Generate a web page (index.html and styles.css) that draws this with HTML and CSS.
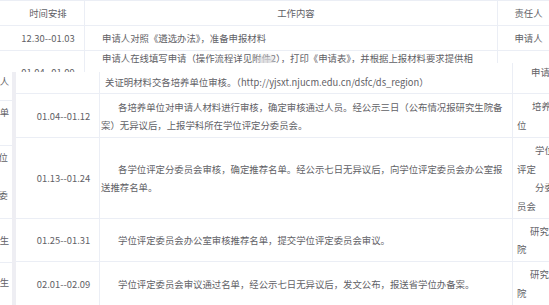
FILE: index.html
```html
<!DOCTYPE html>
<html lang="zh">
<head>
<meta charset="utf-8">
<title>遴选时间安排</title>
<link rel="stylesheet" href="styles.css">
</head>
<body>
<div class="stage">
  <div class="base">
    <div class="row head">
      <div class="cell c-time">时间安排</div>
      <div class="cell c-work head-work">工作内容</div>
      <div class="cell c-owner">责任人</div>
    </div>
    <div class="row r1">
      <div class="cell c-time">12.30--01.03</div>
      <div class="cell c-work">申请人对照《遴选办法》，准备申报材料</div>
      <div class="cell c-owner">申请人</div>
    </div>
    <div class="row r2">
      <div class="cell c-time">01.04--01.09</div>
      <div class="cell c-work top">申请人在线填写申请（操作流程详见附件2），打印《申请表》，并根据上报材料要求提供相</div>
      <div class="cell c-owner">申请人</div>
    </div>
  </div>

  <span class="smudge"></span>

  <div class="lower">
    <div class="lc lt first"></div>
    <div class="lc lw first-w">关证明材料交各培养单位审核。（http://yjsxt.njucm.edu.cn/dsfc/ds_region）</div>
    <div class="lc lo top"><div class="ln i14">申请人</div></div>

    <div class="lc lt">01.04--01.12</div>
    <div class="lc lw"><p class="para">各培养单位对申请人材料进行审核，确定审核通过人员。经公示三日（公布情况报研究生院备<br>案）无异议后，上报学科所在学位评定分委员会。</p></div>
    <div class="lc lo"><div class="ln i15">培养单</div><div class="ln">位</div></div>

    <div class="lc lt">01.13--01.24</div>
    <div class="lc lw"><p class="para">各学位评定分委员会审核，确定推荐名单。经公示七日无异议后，向学位评定委员会办公室报<br>送推荐名单。</p></div>
    <div class="lc lo"><div class="ln i18">学位</div><div class="ln">评定</div><div class="ln i18">分委</div><div class="ln">员会</div></div>

    <div class="lc lt">01.25--01.31</div>
    <div class="lc lw"><p class="para">学位评定委员会办公室审核推荐名单，提交学位评定委员会审议。</p></div>
    <div class="lc lo"><div class="ln i13">研究生</div><div class="ln">院</div></div>

    <div class="lc lt">02.01--02.09</div>
    <div class="lc lw"><p class="para">学位评定委员会审议通过名单，经公示七日无异议后，发文公布，报送省学位办备案。</p></div>
    <div class="lc lo"><div class="ln i13">研究生</div><div class="ln">院</div></div>
  </div>

  <div class="fixed-left">
    <div class="fl fl-a"><div class="fl-in"><div class="ln f14">申请人</div></div></div>
    <div class="fl fl-b"><div class="fl-in"><div class="ln f14">培养单</div><div class="ln">位</div></div></div>
    <div class="fl fl-c"><div class="fl-in"><div class="ln f22">学位</div><div class="ln">评定</div><div class="ln f22">分委</div><div class="ln">员会</div></div></div>
    <div class="fl fl-d"><div class="fl-in"><div class="ln f14">研究生</div><div class="ln">院</div></div></div>
    <div class="fl fl-e"><div class="fl-in"><div class="ln f14">研究生</div><div class="ln">院</div></div></div>
  </div>
</div>
</body>
</html>
```

FILE: styles.css
```css
html, body {
  margin: 0;
  padding: 0;
  background: #fff;
}

.stage {
  position: relative;
  width: 549px;
  height: 305px;
  overflow: hidden;
  background: #fff;
  color: #5f6166;
  font-family: "Noto Sans CJK SC", "Noto Sans", sans-serif;
  font-size: 9.4px;
  line-height: 18px;
}

/* ---------- base (upper) table ---------- */
.base {
  border-top: 1px solid #ebeef5;
}

.row {
  display: grid;
  grid-template-columns: 85px 413px 70px;
}

.head { height: 25px; }
.r1 { height: 25px; }
.r2 { height: 60px; }

.cell {
  box-sizing: border-box;
  display: flex;
  align-items: center;
  border-right: 1px solid #ebeef5;
  border-bottom: 1px solid #ebeef5;
  white-space: nowrap;
}

.c-time {
  justify-content: center;
  padding-left: 12px;
}

.c-work {
  padding-left: 17px;
}

.head-work {
  justify-content: center;
  padding-left: 10px;
}

.c-owner {
  justify-content: center;
  padding-right: 8px;
}

.cell.top {
  align-items: flex-start;
  line-height: 14px;
}

.r2 .c-time {
  align-items: flex-start;
  padding-top: 12px;
}

.smudge {
  position: absolute;
  left: 258px;
  top: 56px;
  width: 16px;
  height: 11px;
  background: #d9d9dc;
  filter: blur(2px);
  opacity: 0.8;
}

/* ---------- lower (overlapping) table ---------- */
.lower {
  position: absolute;
  top: 63px;
  left: 16px;
  display: grid;
  grid-template-columns: 84px 413px 80px;
  grid-template-rows: 31px 44px 81px 43px 44px;
}

.lc {
  box-sizing: border-box;
  display: flex;
  align-items: center;
  background: #fff;
  border-right: 1px solid #ebeef5;
  border-bottom: 1px solid #ebeef5;
}

.lt {
  justify-content: center;
  padding-left: 12px;
  white-space: nowrap;
}

.lt.first {
  border-right: none;
  background:
    linear-gradient(to right, transparent 83px, #ebeef5 83px) 0 100% / 100% calc(100% - 9px) no-repeat,
    linear-gradient(#fff, #fff) 0 100% / 100% calc(100% - 9px) no-repeat;
  background-color: transparent;
}

.lw {
  padding-left: 1px;
  padding-right: 5px;
  white-space: nowrap;
}

.lw.first-w {
  align-items: flex-start;
  padding-left: 5px;
  padding-top: 10px;
}

.para {
  margin: 0;
  text-indent: 17px;
  line-height: 18px;
}

.lo {
  flex-direction: column;
  align-items: flex-start;
  justify-content: center;
  padding-left: 4px;
  line-height: 18.5px;
  white-space: nowrap;
}

.lo.top {
  justify-content: flex-start;
}

.ln { white-space: nowrap; }
.i13 { padding-left: 13px; }
.i14 { padding-left: 14px; }
.i15 { padding-left: 15px; }
.i18 { padding-left: 18px; }

/* ---------- fixed left column strip ---------- */
.fixed-left {
  position: absolute;
  top: 72px;
  left: 0;
  width: 12px;
  border-right: 4px solid #eeeef3;
  background: #fff;
}

.fl {
  box-sizing: border-box;
  overflow: hidden;
  border-bottom: 1px solid #ebeef5;
  line-height: 19px;
}

.fl-in {
  margin-left: -33px;
  width: 60px;
}

.fl-a { height: 29px; padding-top: 0; }
.fl-b { height: 45px; padding-top: 2px; }
.fl-c { height: 73px; padding-top: 2px; }
.fl-d { height: 44px; padding-top: 12px; }
.fl-e { height: 44px; padding-top: 10px; }

.f14 { padding-left: 14px; }
.f22 { padding-left: 22px; }
```
